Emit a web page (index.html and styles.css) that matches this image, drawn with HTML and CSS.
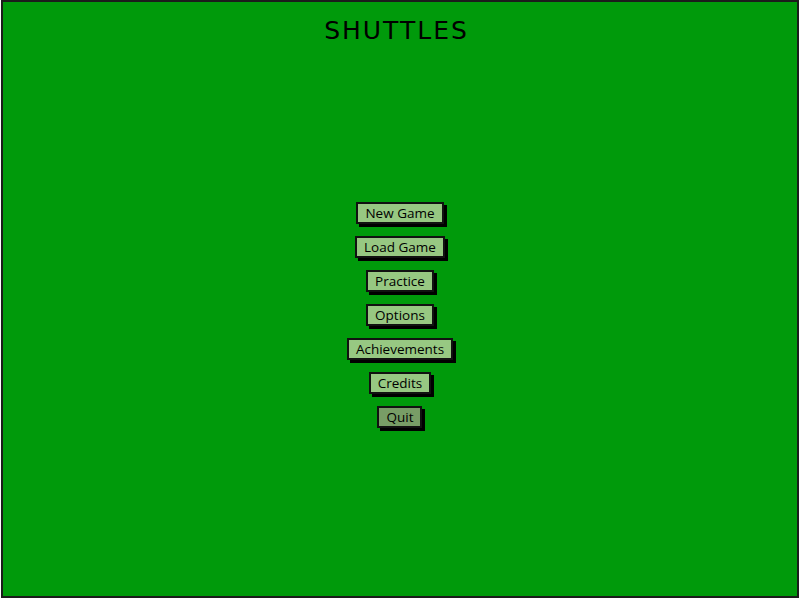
FILE: index.html
```html
<!DOCTYPE html>
<html>
<head>
<meta charset="utf-8">
<link rel="stylesheet" href="styles.css">
</head>
<body>
<div class="frame">
  <h1 class="title">SHUTTLES</h1>
  <nav class="menu">
    <button class="btn">New Game</button>
    <button class="btn">Load Game</button>
    <button class="btn">Practice</button>
    <button class="btn">Options</button>
    <button class="btn">Achievements</button>
    <button class="btn">Credits</button>
    <button class="btn btn-dim">Quit</button>
  </nav>
</div>
</body>
</html>
```
FILE: styles.css
```css
html, body {
  margin: 0;
  padding: 0;
  background: #ffffff;
}
.frame {
  box-sizing: border-box;
  width: 798px;
  height: 598px;
  margin-left: 1px;
  border: 2px solid #1c1c1c;
  background: #009a0b;
  display: flex;
  flex-direction: column;
  align-items: center;
  font-family: "Open Sans", "DejaVu Sans", sans-serif;
}
.title {
  margin: 13px 0 0 0;
  font-family: "DejaVu Sans", sans-serif;
  font-weight: 400;
  font-size: 25px;
  line-height: 32px;
  letter-spacing: 2px;
  color: #000;
  padding-right: 7px;
}
.menu {
  margin-top: 155px;
  display: flex;
  flex-direction: column;
  align-items: center;
  gap: 12px;
}
.btn {
  box-sizing: border-box;
  height: 22px;
  padding: 0 7px;
  border: 2px solid #111;
  background: #97c882;
  box-shadow: 3px 3px 0 #000;
  font-family: "Open Sans", "DejaVu Sans", sans-serif;
  font-size: 13.5px;
  line-height: 18px;
  color: #000;
  cursor: pointer;
}
.btn-dim {
  background: #789d66;
}
```
